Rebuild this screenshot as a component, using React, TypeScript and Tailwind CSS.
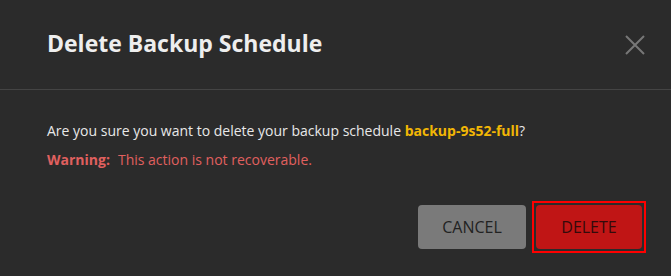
export default function App() {
  return (
    <div className="h-[276px] w-[671px] overflow-hidden bg-[#2b2b2b] font-['Open_Sans',sans-serif]">
      <header className="flex h-[90px] items-center justify-between border-b border-[#444444] pl-[47px] pr-[24px]">
        <h2 className="pb-[2px] text-[23px] font-bold text-[#eeeeee]">Delete Backup Schedule</h2>
        <button type="button" className="text-[#777777]" aria-label="Close">
          <svg width="24" height="24" viewBox="0 0 24 24" fill="none" stroke="currentColor" strokeWidth="2">
            <path d="M3 3l18 18M21 3L3 21" />
          </svg>
        </button>
      </header>

      <div className="px-[47px] pt-[30px] text-[14px]">
        <p className="font-medium text-[#e8e8e8]">
          Are you sure you want to delete your backup schedule{' '}
          <span className="font-bold text-[#f2b705]">backup-9s52-full</span>?
        </p>
        <p className="mt-[8px] text-[#e0605f]">
          <span className="mr-[8px] font-bold">Warning:</span>
          This action is not recoverable.
        </p>
      </div>

      <div className="mt-[31px] flex items-center justify-end gap-[6px] pr-[25px] text-[16px]">
        <button
          type="button"
          className="h-[44px] w-[108px] rounded-[4px] bg-[#7a7a7a] text-[#222222]"
        >
          CANCEL
        </button>
        <div className="border-2 border-[#ff0000] p-[2px]">
          <button
            type="button"
            className="block h-[44px] w-[106px] rounded-[4px] bg-[#c01515] text-[#330b0b]"
          >
            DELETE
          </button>
        </div>
      </div>
    </div>
  );
}
